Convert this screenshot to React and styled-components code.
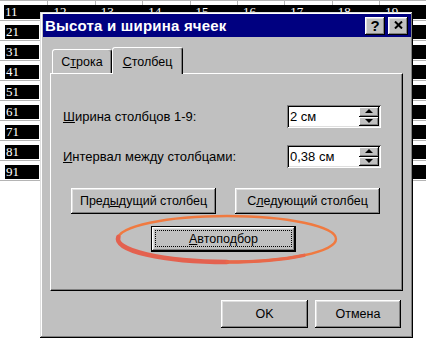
import React from 'react'
import styled, { createGlobalStyle } from 'styled-components'

const GlobalStyle = createGlobalStyle`
  html, body {
    margin: 0;
    padding: 0;
    background: #fff;
  }
  body {
    font-family: "Liberation Sans", Arial, sans-serif;
  }
`

const Screen = styled.div`
  position: relative;
  width: 426px;
  height: 338px;
  overflow: hidden;
  background: #fff;
`

/* spreadsheet behind the dialog */

const Sheet = styled.div`
  display: flex;
  flex-direction: column;
  border-top: 1px solid #b4b4b4;
`

const SheetRow = styled.div`
  display: grid;
  grid-template-columns: repeat(8, 47.4px) 1fr;
  height: 20px;
  box-sizing: border-box;
  border-bottom: 1px solid #b4b4b4;
`

const Cell = styled.div`
  min-width: 0;
  padding-top: 4px;
  padding-left: ${p => (p.$band ? (p.$first ? '4px' : '0') : '5px')};
  padding-right: ${p => (p.$band || p.$last ? '0' : '8px')};
  border-left: ${p => (p.$band && !p.$first ? '1px solid #b4b4b4' : 'none')};
`

const Num = styled.div`
  height: 14px;
  background: #000;
  color: #fff;
  font: 13px/14px "Liberation Serif", "Times New Roman", serif;
  padding-left: ${p => (p.$band && !p.$first ? '6px' : '1px')};
  margin-left: ${p => (p.$band && !p.$first ? '-1px' : '0')};
  white-space: nowrap;
  overflow: hidden;
`

/* dialog window */

const Dialog = styled.div`
  position: absolute;
  left: 40px;
  top: 12px;
  width: 373px;
  height: 326px;
  box-sizing: border-box;
  padding: 2px 2px 2px 3px;
  background: #c0c0c0;
  box-shadow: inset -1px -1px #000, inset 1px 1px #dfdfdf, inset -2px -2px #808080, inset 2px 2px #fff;
  display: flex;
  flex-direction: column;
`

const TitleBar = styled.div`
  height: 23px;
  flex: none;
  background: #000080;
  display: flex;
  align-items: center;
  gap: 3px;
  padding: 0 3px 0 2px;
`

const Title = styled.div`
  flex: 1;
  color: #fff;
  font-weight: bold;
  font-size: 15px;
  letter-spacing: 0.2px;
  white-space: nowrap;
`

const TitleButton = styled.div`
  width: 20px;
  height: 18px;
  box-sizing: border-box;
  background: #c0c0c0;
  box-shadow: inset -1px -1px #000, inset 1px 1px #fff, inset -2px -2px #808080, inset 2px 2px #dfdfdf;
  display: flex;
  align-items: center;
  justify-content: center;
  font-weight: bold;
  font-size: 15px;
  line-height: 1;
  color: #000;
  padding-bottom: 1px;
`

const Body = styled.div`
  padding: 10px 8px 0 7px;
  display: flex;
  flex-direction: column;
`

const TabStrip = styled.div`
  display: flex;
  align-items: flex-end;
  height: 26px;
  padding-left: 2px;
  position: relative;
  z-index: 1;
`

const Tab = styled.div`
  width: ${p => p.$w}px;
  height: ${p => (p.$active ? 27 : 24)}px;
  margin-bottom: ${p => (p.$active ? '-1px' : '0')};
  box-sizing: border-box;
  padding-top: ${p => (p.$active ? 7 : 5)}px;
  background: #c0c0c0;
  border: 1px solid;
  border-bottom: none;
  border-color: #fff #000 transparent #fff;
  border-radius: 3px 3px 0 0;
  box-shadow: inset -1px 0 #808080;
  text-align: center;
  font-size: 12.5px;
  line-height: 14px;
  color: #000;
`

const Panel = styled.div`
  height: 218px;
  box-sizing: border-box;
  border: 1px solid;
  border-color: #fff #000 #000 #fff;
  box-shadow: inset -1px -1px #808080;
  display: flex;
  flex-direction: column;
`

const FieldRow = styled.div`
  display: flex;
  align-items: center;
  justify-content: space-between;
  height: 23px;
  margin-top: ${p => p.$top}px;
  padding: 0 21px 0 12px;
`

const Label = styled.div`
  font-size: 13px;
  color: #000;
`

const SpinField = styled.div`
  width: 94px;
  height: 23px;
  box-sizing: border-box;
  padding: 2px 2px 2px 3px;
  background: #fff;
  box-shadow: inset 1px 1px #808080, inset -1px -1px #fff, inset 2px 2px #000, inset -2px -2px #dfdfdf;
  display: flex;
  align-items: center;
`

const Value = styled.div`
  flex: 1;
  font-size: 13px;
  color: #000;
`

const Spinner = styled.div`
  width: 20px;
  height: 19px;
  display: flex;
  flex-direction: column;
`

const SpinButton = styled.div`
  flex: 1;
  background: #c0c0c0;
  box-shadow: inset -1px -1px #000, inset 1px 1px #fff, inset -2px -2px #808080;
  display: flex;
  align-items: center;
  justify-content: center;

  &::before {
    content: '';
    border-left: 4px solid transparent;
    border-right: 4px solid transparent;
    ${p => (p.$down ? 'border-top: 4px solid #000;' : 'border-bottom: 4px solid #000;')}
    margin-top: ${p => (p.$down ? '0' : '-1px')};
  }
`

const ButtonRow = styled.div`
  display: flex;
  gap: 19px;
  padding-left: 20px;
  margin-top: 20px;
`

const PushButton = styled.div`
  position: relative;
  width: ${p => p.$w}px;
  height: ${p => p.$h || 26}px;
  flex: none;
  box-sizing: border-box;
  border: ${p => (p.$default ? '1px solid #000' : 'none')};
  background: #c0c0c0;
  box-shadow: inset -1px -1px #000, inset 1px 1px #fff, inset -2px -2px #808080, inset 2px 2px #dfdfdf;
  display: flex;
  align-items: center;
  justify-content: center;
  font-size: 12.5px;
  color: #000;
  white-space: nowrap;

  ${p => p.$default && `
    &::after {
      content: '';
      position: absolute;
      inset: 3px 3px 4px 3px;
      border: 1px dotted #000;
    }
  `}
`

const AutoRow = styled.div`
  margin-top: 12px;
  padding-left: 100px;
`

const Footer = styled.div`
  display: flex;
  justify-content: flex-end;
  gap: 7px;
  margin-top: 9px;
  padding-right: 2px;
`

const Annotation = styled.svg`
  position: absolute;
  left: 110px;
  top: 205px;
  pointer-events: none;
`

const rows = [1, 2, 3, 4, 5, 6, 7, 8, 9]

// only the cells that peek out from behind the dialog carry a number
const showNumber = (r, c) => r === 1 || c === 1 || c === 9

export default function App() {
  return (
    <Screen>
      <GlobalStyle />
      <Sheet>
        {rows.map(r => (
          <SheetRow key={r}>
            {rows.map(c => (
              <Cell key={c} $band={r === 1} $first={c === 1} $last={c === 9}>
                <Num $band={r === 1} $first={c === 1}>{showNumber(r, c) ? r * 10 + c : ''}</Num>
              </Cell>
            ))}
          </SheetRow>
        ))}
      </Sheet>

      <Dialog>
        <TitleBar>
          <Title>Высота и ширина ячеек</Title>
          <TitleButton>?</TitleButton>
          <TitleButton>
            <svg width="9" height="8" viewBox="0 0 9 8">
              <path d="M1 0.5 L8 7.5 M8 0.5 L1 7.5" stroke="#000" strokeWidth="2" />
            </svg>
          </TitleButton>
        </TitleBar>

        <Body>
          <TabStrip>
            <Tab $w={60}>С<u>т</u>рока</Tab>
            <Tab $w={71} $active><u>С</u>толбец</Tab>
          </TabStrip>

          <Panel>
            <FieldRow $top={31}>
              <Label><u>Ш</u>ирина столбцов 1-9:</Label>
              <SpinField>
                <Value>2 см</Value>
                <Spinner>
                  <SpinButton />
                  <SpinButton $down />
                </Spinner>
              </SpinField>
            </FieldRow>
            <FieldRow $top={17}>
              <Label><u>И</u>нтервал между столбцами:</Label>
              <SpinField>
                <Value>0,38 см</Value>
                <Spinner>
                  <SpinButton />
                  <SpinButton $down />
                </Spinner>
              </SpinField>
            </FieldRow>

            <ButtonRow>
              <PushButton $w={145}>Пред<u>ы</u>дущий столбец</PushButton>
              <PushButton $w={145}>С<u>л</u>едующий столбец</PushButton>
            </ButtonRow>

            <AutoRow>
              <PushButton $w={145} $default><u>А</u>втоподбор</PushButton>
            </AutoRow>
          </Panel>

          <Footer>
            <PushButton $w={87} $h={28}>OK</PushButton>
            <PushButton $w={86} $h={28}>Отмена</PushButton>
          </Footer>
        </Body>
      </Dialog>

      <Annotation width="240" height="65" viewBox="0 0 240 65">
        <ellipse cx="117" cy="34" rx="109" ry="23" fill="none" stroke="#f07a40" strokeWidth="2.4" />
        <path d="M8.4 32 A109 23 0 0 0 117 57" fill="none" stroke="#e4614f" strokeWidth="4.6" strokeLinecap="round" />
        <path d="M117 57 A109 23 0 0 0 194 50.3" fill="none" stroke="#e8684a" strokeWidth="3.4" strokeLinecap="round" />
      </Annotation>
    </Screen>
  )
}
